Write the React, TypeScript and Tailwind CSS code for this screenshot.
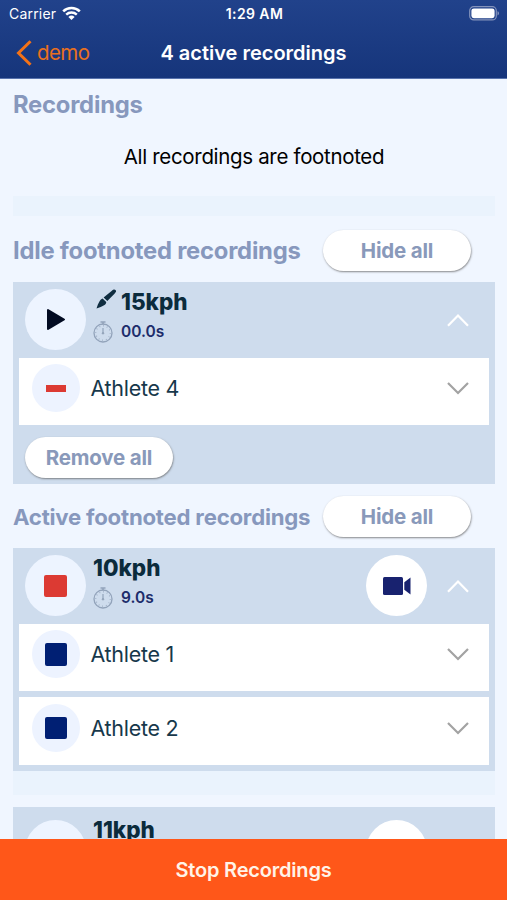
import type { ReactNode } from "react";

type Athlete = { name: string; idle?: boolean };

function WifiIcon() {
  return (
    <svg className="h-[15px] w-[19px]" viewBox="0 0 19 15" fill="none">
      <path d="M1.2 5.4a12 12 0 0 1 16.6 0" stroke="#fff" strokeWidth="2.6" />
      <path d="M4.2 8.6a7.7 7.7 0 0 1 10.6 0" stroke="#fff" strokeWidth="2.4" />
      <path d="M9.5 14 6.4 10.9a4.5 4.5 0 0 1 6.2 0Z" fill="#fff" />
    </svg>
  );
}

function BatteryIcon() {
  return (
    <svg className="h-[15px] w-[31px]" viewBox="0 0 31 15">
      <rect x="0.7" y="0.7" width="26.6" height="13.2" rx="4" fill="none" stroke="#8493bb" strokeWidth="1.2" />
      <rect x="2.4" y="2.4" width="23.2" height="9.8" rx="2.4" fill="#fff" />
      <path d="M28.5 5.2c2 .6 2 3.6 0 4.2Z" fill="#8493bb" />
    </svg>
  );
}

function BrushIcon() {
  return (
    <svg className="h-5 w-[21px]" viewBox="0 0 21 20" fill="#0f2d40">
      <path d="M17.2.8c1.7-1 3.5.6 2.6 2.3-.3.6-.8 1.1-1.3 1.6l-7.2 7.3-3.7-3.400 8-6.500c.5-.5 1-.9 1.600-1.300Z" />
      <path d="M6.600 9.600l3.600 3.300c0 1.300-.6 2.300-1.700 3C6.200 17.300 3.300 18.600.5 19.400c.8-2.600 1.800-5 3.200-7.300.7-1.200 1.600-2.100 2.900-2.500Z" />
    </svg>
  );
}

function StopwatchIcon() {
  return (
    <svg className="h-[22px] w-5" viewBox="0 0 20 22" fill="none" stroke="#92a3ba">
      <circle cx="10" cy="12" r="9" strokeWidth="1.3" />
      <circle cx="10" cy="12" r="7.2" strokeWidth="1.2" strokeDasharray="0.7 3.07" />
      <path d="M7.500 1h5M10 1v2.500" strokeWidth="1.5" />
      <path d="M10 7v5.500" strokeWidth="1.2" />
      <circle cx="10" cy="12.300" r="0.8" fill="#92a3ba" />
    </svg>
  );
}

function Chevron({ up }: { up?: boolean }) {
  return (
    <svg className="h-3.5 w-[22px] shrink-0" viewBox="0 0 22 14" fill="none">
      {up ? (
        <path d="M1 12.800 11 2.500l10 10.300" stroke="#fff" strokeWidth="2.2" />
      ) : (
        <path d="M1 1.900 11 12 21 1.900" stroke="#a3a3a3" strokeWidth="2.2" />
      )}
    </svg>
  );
}

function PillButton({ children }: { children: ReactNode }) {
  return (
    <button className="h-[41px] w-[148px] shrink-0 rounded-full bg-white pt-0.5 text-[20.5px] font-bold tracking-[-0.2px] text-[#8999ba] shadow-[0.5px_1px_2px_rgba(90,90,90,0.7)]">
      {children}
    </button>
  );
}

function SectionTitle({ small, children }: { small?: boolean; children: ReactNode }) {
  return (
    <h2
      className={`whitespace-nowrap pt-px font-bold tracking-[-0.22px] text-[#8798bd] ${small ? "text-[22.2px]" : "text-[23.8px]"}`}
    >
      {children}
    </h2>
  );
}

function AthleteRow({ name, idle }: Athlete) {
  return (
    <div className="flex h-[67.5px] items-center bg-white pr-5 pl-[13px] pb-1.5">
      <div className="flex h-12 w-12 items-center justify-center rounded-full bg-[#edf3ff]">
        {idle ? <div className="h-[7px] w-5 bg-[#dc3a33]" /> : <div className="h-[22.5px] w-[22.5px] rounded-[2px] bg-[#001f73]" />}
      </div>
      <span className="ml-[10.5px] flex-1 text-[21.5px] tracking-[-0.3px] text-[#17384b]">{name}</span>
      <Chevron />
    </div>
  );
}

type GroupProps = {
  title: string;
  time?: string;
  idle?: boolean;
  tall?: boolean;
  athletes?: Athlete[];
  children?: ReactNode;
};

function RecordingGroup({ title, time, idle, tall, athletes = [], children }: GroupProps) {
  return (
    <div className="bg-[#cedced] px-1.5 pb-1.5">
      <div className={`flex items-center pr-5 pl-1.5 ${tall ? "h-[88px]" : "h-[75.5px]"}`}>
        <div className="flex h-[61px] w-[61px] shrink-0 items-center justify-center rounded-full bg-[#edf4ff]">
          {idle ? (
            <svg className="h-[23px] w-5" viewBox="0 0 20 23">
              <path d="M2 2v19L18 11.500Z" fill="#020b22" stroke="#020b22" strokeWidth="2" strokeLinejoin="round" />
            </svg>
          ) : (
            <div className="h-[22.5px] w-[22.5px] rounded-[2px] bg-[#dc3a33]" />
          )}
        </div>
        <div className={`ml-[7px] flex-1 self-start ${tall ? "pt-2" : "pt-[5px]"}`}>
          <div className="flex h-[30px] items-center">
            {idle && (
              <div className="mr-1 ml-[3px] -mt-1.5">
                <BrushIcon />
              </div>
            )}
            <span className="text-[22.5px] font-extrabold text-[#0b2b3c]">{title}</span>
          </div>
          {time && (
            <div className="flex h-[30px] items-center gap-2">
              <StopwatchIcon />
              <span className="text-[15.5px] font-semibold text-[#1d2d6b]">{time}</span>
            </div>
          )}
        </div>
        {!idle && (
          <div className="mr-5 flex h-[61px] w-[61px] items-center justify-center rounded-full bg-white">
            <svg className="h-[18px] w-7" viewBox="0 0 28 18" fill="#18226f">
              <rect x="0" y="0" width="20" height="18" rx="1.5" />
              <path d="M21.300 5.200 27.500.5v17l-6.200-4.700Z" />
            </svg>
          </div>
        )}
        <Chevron up />
      </div>
      <div className="space-y-1.5">
        {athletes.map(a => (
          <AthleteRow key={a.name} {...a} />
        ))}
      </div>
      {children}
    </div>
  );
}

export default function App() {
  return (
    <div className="flex h-[900px] w-[507px] flex-col overflow-hidden bg-[#f0f6ff] font-['Inter',sans-serif]">
      <header className="h-[79px] shrink-0 border-b border-[#5873ad] bg-gradient-to-b from-[#21428b] to-[#16357b] text-white">
        <div className="grid h-[27px] grid-cols-3 items-center pr-[7px] pl-[9px]">
          <div className="flex items-center gap-1.5 text-[14px] tracking-[0.2px]">
            Carrier
            <WifiIcon />
          </div>
          <div className="text-center text-[14px] font-semibold tracking-[0.4px]">1:29 AM</div>
          <div className="flex justify-end">
            <BatteryIcon />
          </div>
        </div>
        <div className="grid h-[51px] grid-cols-[1fr_auto_1fr] items-center px-4">
          <div className="flex items-center gap-[5px] text-[20.5px] tracking-[-0.6px] text-[#e9701e]">
            <svg className="h-[26px] w-4" viewBox="0 0 16 26" fill="none">
              <path d="M14.500 1.200 2.500 13l12 11.800" stroke="#f47216" strokeWidth="3" />
            </svg>
            <span className="pt-0.5">demo</span>
          </div>
          <h1 className="text-[20px] font-semibold">4 active recordings</h1>
        </div>
      </header>

      <main className="flex-1 overflow-hidden pr-3 pl-[13px]">
        <div className="flex h-[50px] items-center">
          <SectionTitle>Recordings</SectionTitle>
        </div>
        <p className="h-[67px] pt-[13px] text-center text-[20.5px] tracking-[-0.33px] text-black">
          All recordings are footnoted
        </p>
        <div className="h-5 bg-[#eaf3fd]" />

        <div className="flex h-[66px] items-center justify-between pt-0.5 pr-6">
          <SectionTitle>Idle footnoted recordings</SectionTitle>
          <PillButton>Hide all</PillButton>
        </div>
        <RecordingGroup idle title="15kph" time="00.0s" athletes={[{ name: "Athlete 4", idle: true }]}>
          <div className="pt-3 pl-1.5">
            <PillButton>Remove all</PillButton>
          </div>
        </RecordingGroup>

        <div className="flex h-[64px] items-center justify-between pr-6">
          <SectionTitle small>Active footnoted recordings</SectionTitle>
          <PillButton>Hide all</PillButton>
        </div>
        <RecordingGroup title="10kph" time="9.0s" athletes={[{ name: "Athlete 1" }, { name: "Athlete 2" }]} />
        <div className="mb-3 h-6 bg-[#eaf3fd]" />
        <RecordingGroup tall title="11kph" />
      </main>

      <button className="h-[61px] w-full shrink-0 bg-[#ff5719] text-[20px] font-semibold tracking-[-0.2px] text-[#fff3e8]">
        Stop Recordings
      </button>
    </div>
  );
}
